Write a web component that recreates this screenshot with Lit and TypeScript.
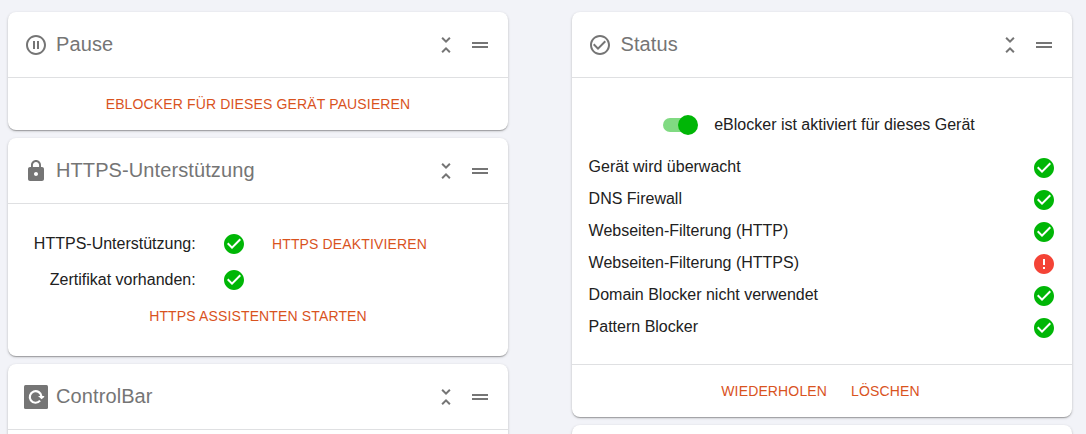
import { LitElement, html, css } from "lit";
import { customElement, property } from "lit/decorators.js";

const ICONS: Record<string, string> = {
  pause: "M9 16h2V8H9v8zm3-14C6.48 2 2 6.48 2 12s4.48 10 10 10 10-4.48 10-10S17.52 2 12 2zm0 18c-4.41 0-8-3.59-8-8s3.59-8 8-8 8 3.59 8 8-3.59 8-8 8zm1-4h2V8h-2v8z",
  lock: "M18 8h-1V6c0-2.76-2.24-5-5-5S7 3.24 7 6v2H6c-1.1 0-2 .9-2 2v10c0 1.1.9 2 2 2h12c1.1 0 2-.9 2-2V10c0-1.1-.9-2-2-2zm-6 9c-1.1 0-2-.9-2-2s.9-2 2-2 2 .9 2 2-.9 2-2 2zm3.1-9H8.9V6c0-1.71 1.39-3.1 3.1-3.1s3.1 1.39 3.1 3.1v2z",
  status: "M16.59 7.58L10 14.17l-3.59-3.58L5 12l5 5 8-8zM12 2C6.48 2 2 6.48 2 12s4.48 10 10 10 10-4.48 10-10S17.52 2 12 2zm0 18c-4.42 0-8-3.58-8-8s3.58-8 8-8 8 3.58 8 8-3.58 8-8 8z",
  collapse: "M7.41 18.59L8.83 20 12 16.83 15.17 20l1.41-1.41L12 14l-4.59 4.59zm9.18-13.18L15.17 4 12 7.17 8.83 4 7.41 5.41 12 10l4.59-4.59z",
  drag: "M20 9H4v2h16V9zM4 15h16v-2H4v2z",
  ok: "M12 2C6.48 2 2 6.48 2 12s4.48 10 10 10 10-4.48 10-10S17.52 2 12 2zm-2 15l-5-5 1.41-1.41L10 14.17l7.59-7.59L19 8l-9 9z",
  error: "M12 2C6.48 2 2 6.48 2 12s4.48 10 10 10 10-4.48 10-10S17.52 2 12 2zm1 15h-2v-2h2v2zm0-4h-2V7h2v6z",
};

@customElement("eb-icon")
export class EbIcon extends LitElement {
  @property() name = "";
  static styles = css`
    :host { display: block; width: 24px; height: 24px; flex: none; }
    :host([name="ok"]) { color: #00b606; }
    :host([name="error"]) { color: #f44336; }
    .svg { display: block; width: 24px; height: 24px; fill: currentColor; }
    .ring { fill: none; stroke: #fff; stroke-width: 2.2; }
    .tip { fill: #fff; }
  `;
  render() {
    if (this.name === "controlbar") {
      return html`<svg class="svg" viewBox="0 0 24 24">
        <rect width="24" height="24" rx="1.5" />
        <path class="ring" d="M16.07 15.66A5.8 5.8 0 1 1 17.4 11.4" />
        <path class="tip" d="M14 11h6.2v1l-2.6 2.2z" />
      </svg>`;
    }
    return html`<svg class="svg" viewBox="0 0 24 24"><path d=${ICONS[this.name] ?? ""} /></svg>`;
  }
}

@customElement("eb-card")
export class EbCard extends LitElement {
  @property() icon = "";
  @property() heading = "";
  static styles = css`
    :host {
      display: block;
      background: #fff;
      border-radius: 8px;
      box-shadow: 0 1px 3px 0 rgba(0, 0, 0, 0.2), 0 1px 1px 0 rgba(0, 0, 0, 0.14), 0 2px 1px -1px rgba(0, 0, 0, 0.12);
    }
    .head {
      display: flex;
      align-items: center;
      box-sizing: border-box;
      height: 66px;
      padding: 1px 16px 0;
      border-bottom: 1px solid #dfe0e2;
      color: #757575;
    }
    .title {
      flex: 1;
      margin: 0 0 2px 8px;
      font-size: 20px;
      font-weight: 400;
      line-height: 24px;
      letter-spacing: 0.1px;
    }
    :host([icon="status"]) .title { padding-left: 0.5px; }
    .tools { display: flex; gap: 10px; }
  `;
  render() {
    return html`
      <header class="head">
        <eb-icon name=${this.icon}></eb-icon>
        <h2 class="title">${this.heading}</h2>
        <div class="tools"><eb-icon name="collapse"></eb-icon><eb-icon name="drag"></eb-icon></div>
      </header>
      <slot></slot>
    `;
  }
}

const CHECKS: Array<[string, string]> = [
  ["Gerät wird überwacht", "ok"],
  ["DNS Firewall", "ok"],
  ["Webseiten-Filterung (HTTP)", "ok"],
  ["Webseiten-Filterung (HTTPS)", "error"],
  ["Domain Blocker nicht verwendet", "ok"],
  ["Pattern Blocker", "ok"],
];

@customElement("app-root")
export class AppRoot extends LitElement {
  static styles = css`
    :host {
      display: block;
      box-sizing: border-box;
      height: 434px;
      overflow: hidden;
      padding: 12px 14px 0 8px;
      background: #f2f3f8;
      color: #212121;
      font-family: "Liberation Sans", Arial, sans-serif;
      font-size: 16px;
      line-height: 20px;
    }
    .columns { display: grid; grid-template-columns: 500px 500px; justify-content: space-between; align-items: start; }
    .column { display: grid; gap: 8px; }
    .btn {
      padding: 0;
      border: 0;
      background: none;
      color: #d9531e;
      font: 14px/20px "Liberation Sans", Arial, sans-serif;
      letter-spacing: 0.14px;
      text-transform: uppercase;
      white-space: nowrap;
    }
    .actions { display: flex; align-items: center; justify-content: center; gap: 24px; box-sizing: border-box; height: 52px; }
    .ruled { height: 53px; padding-right: 3px; border-top: 1px solid #dfe0e2; }
    .https { height: 152px; box-sizing: border-box; padding-top: 22px; }
    .fact { display: grid; grid-template-columns: 187.7px 50.3px 1fr; align-items: center; height: 36px; }
    .label { text-align: right; }
    .mark { justify-self: end; }
    .fact .btn { justify-self: start; margin-left: 26px; }
    .assistant { display: flex; justify-content: center; height: 36px; align-items: center; }
    .status { height: 286px; box-sizing: border-box; padding: 31px 16px 0; }
    .switch-row { display: flex; align-items: center; justify-content: center; gap: 17px; height: 32px; padding-right: 6px; }
    .track { display: flex; align-items: center; justify-content: flex-end; width: 34px; height: 14px; border-radius: 7px; background: #80da82; }
    .thumb { flex: none; width: 20px; height: 20px; margin-right: -1px; border-radius: 50%; background: #00b606; }
    .checks { margin: 11px 0 0; padding: 0; list-style: none; }
    .check { display: flex; align-items: center; justify-content: space-between; height: 32px; }
    .name { padding: 0 0 2px 0.6px; }
    .stub { height: 66px; }
  `;
  render() {
    return html`
      <main class="columns">
        <div class="column">
          <eb-card icon="pause" heading="Pause">
            <div class="actions"><button class="btn">eBlocker für dieses Gerät pausieren</button></div>
          </eb-card>
          <eb-card icon="lock" heading="HTTPS-Unterstützung">
            <div class="https">
              <div class="fact">
                <span class="label">HTTPS-Unterstützung:</span>
                <eb-icon class="mark" name="ok"></eb-icon>
                <button class="btn">HTTPS deaktivieren</button>
              </div>
              <div class="fact">
                <span class="label">Zertifikat vorhanden:</span>
                <eb-icon class="mark" name="ok"></eb-icon>
              </div>
              <div class="assistant"><button class="btn">HTTPS Assistenten starten</button></div>
            </div>
          </eb-card>
          <eb-card icon="controlbar" heading="ControlBar"><div class="stub"></div></eb-card>
        </div>
        <div class="column">
          <eb-card icon="status" heading="Status">
            <div class="status">
              <div class="switch-row">
                <div class="track"><span class="thumb"></span></div>
                <span>eBlocker ist aktiviert für dieses Gerät</span>
              </div>
              <ul class="checks">
                ${CHECKS.map(([label, state]) => html`<li class="check"><span class="name">${label}</span><eb-icon name=${state}></eb-icon></li>`)}
              </ul>
            </div>
            <div class="actions ruled">
              <button class="btn">Wiederholen</button>
              <button class="btn">Löschen</button>
            </div>
          </eb-card>
          <eb-card></eb-card>
        </div>
      </main>
    `;
  }
}
